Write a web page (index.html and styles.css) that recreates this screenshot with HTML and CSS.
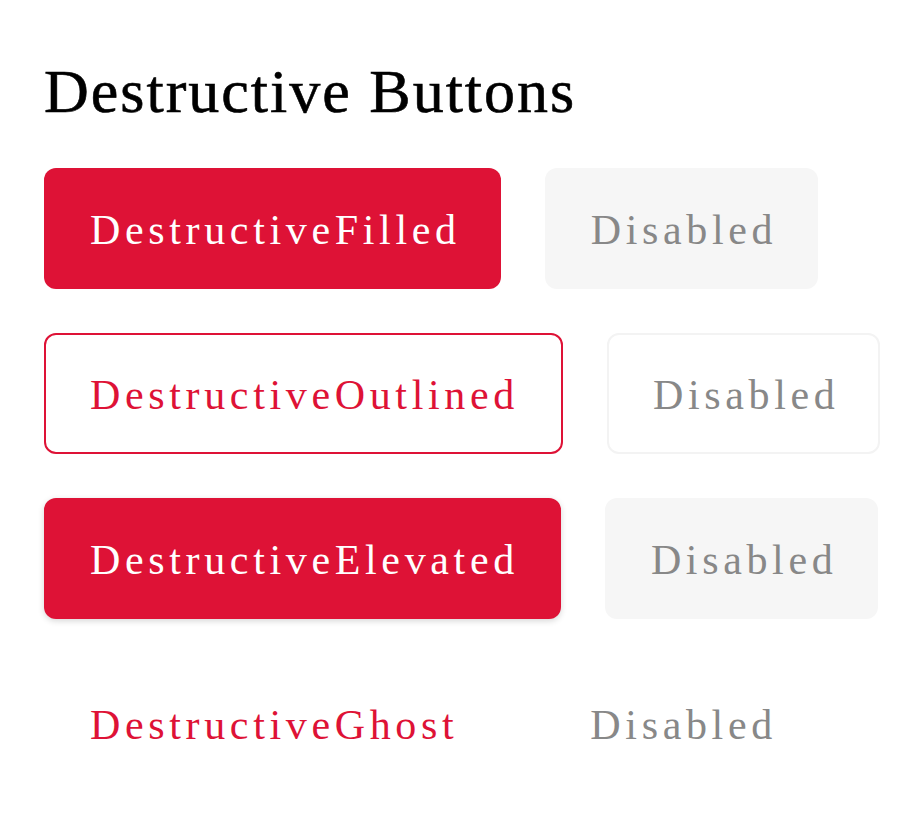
FILE: index.html
```html
<!DOCTYPE html>
<html>
<head>
<meta charset="utf-8">
<link rel="stylesheet" href="styles.css">
</head>
<body>
<main class="page">
  <h1 class="title">Destructive Buttons</h1>
  <div class="rows">
    <div class="row">
      <button class="btn btn-filled">DestructiveFilled</button>
      <button class="btn btn-disabled-fill" disabled>Disabled</button>
    </div>
    <div class="row">
      <button class="btn btn-outlined">DestructiveOutlined</button>
      <button class="btn btn-disabled-outline" disabled>Disabled</button>
    </div>
    <div class="row">
      <button class="btn btn-elevated">DestructiveElevated</button>
      <button class="btn btn-disabled-fill" disabled>Disabled</button>
    </div>
    <div class="row">
      <button class="btn btn-ghost">DestructiveGhost</button>
      <button class="btn btn-disabled-ghost" disabled>Disabled</button>
    </div>
  </div>
</main>
</body>
</html>
```

FILE: styles.css
```css
html, body {
  margin: 0;
  padding: 0;
  background: #ffffff;
}

.page {
  padding: 44px 44px;
  font-family: "Liberation Serif", "Times New Roman", serif;
}

.title {
  margin: 0 0 30px 0;
  font-size: 62px;
  font-weight: 400;
  line-height: 94px;
  letter-spacing: 2px;
  color: #000;
  -webkit-text-stroke: 0.6px #000;
}

.rows {
  display: flex;
  flex-direction: column;
  gap: 44px;
}

.row {
  display: flex;
  gap: 44px;
  align-items: center;
}

.btn {
  box-sizing: border-box;
  height: 121px;
  padding: 3px 40px 0 46px;
  border: none;
  border-radius: 12px;
  font-family: "Liberation Serif", "Times New Roman", serif;
  font-size: 42px;
  letter-spacing: 4.65px;
  background: transparent;
  cursor: pointer;
}

.btn-filled {
  background: #de1236;
  color: #ffffff;
}

.btn-elevated {
  background: #de1236;
  color: #ffffff;
  box-shadow: 0 2px 6px rgba(0, 0, 0, 0.16);
  padding-right: 42px;
}

.btn-outlined {
  background: #ffffff;
  color: #de1236;
  border: 2px solid #de1236;
  padding-left: 44px;
  padding-right: 42px;
}

.btn-ghost {
  color: #de1236;
  padding-right: 42px;
}

.btn-disabled-fill {
  background: #f6f6f6;
  color: #888888;
  padding-right: 41px;
}

.btn-disabled-outline {
  background: #ffffff;
  color: #888888;
  border: 2px solid #f3f3f3;
  padding-left: 44px;
  padding-right: 39px;
}

.btn-disabled-ghost {
  color: #888888;
}
```
